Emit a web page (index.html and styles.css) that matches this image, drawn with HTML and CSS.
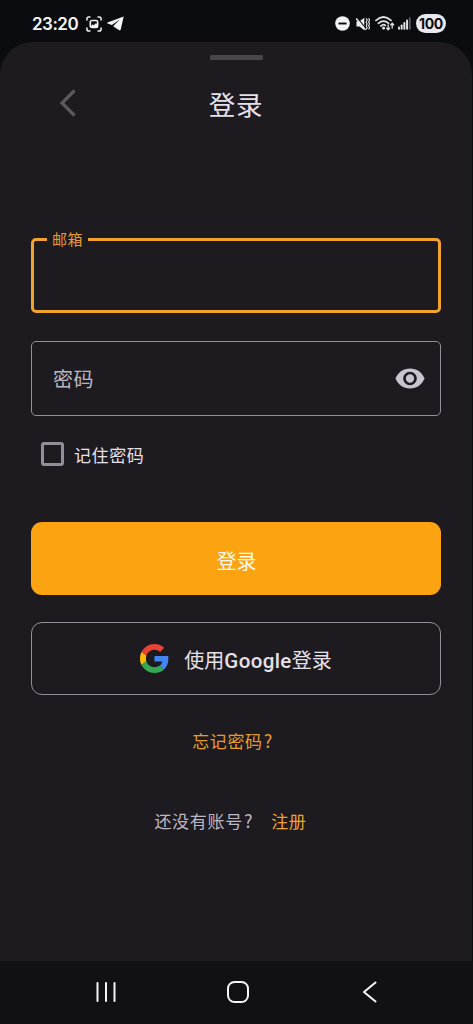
FILE: index.html
```html
<!DOCTYPE html>
<html lang="zh-CN">
<head>
<meta charset="utf-8">
<title>登录</title>
<link rel="stylesheet" href="styles.css">
</head>
<body>
<div class="screen">
  <header class="status">
    <span class="clock">23:20</span>
    <svg class="i-shot" width="16" height="16" viewBox="0 0 17 17" fill="none" stroke="#f4f4f6" stroke-width="1.6" stroke-linecap="round">
      <path d="M1 4.2V3q0-2 2-2h1.200M12.800 1H14q2 0 2 2v1.200M16 12.800V14q0 2-2 2h-1.200M4.200 16H3q-2 0-2-2v-1.200"/>
      <rect x="4.600" y="4.800" width="7.800" height="7.400" rx="1.600" stroke-width="1.700"/>
      <path d="M5.200 11l2-2.200 1.200.9 2.300-2.200 1.300 1.800V12H5.200z" fill="#f4f4f6" stroke="none"/>
    </svg>
    <svg class="i-plane" width="17" height="15" viewBox="0 0 17 15"><path d="M16.700.4L.5 6.600q-.7.5.1.9l4.300 1.400L13 3.300 6.800 9.400 6.400 10.400l5.900 3.900q1.100.5 1.400-.9z" fill="#f7f7f9"/></svg>
    <span class="spacer"></span>
    <svg class="i-dnd" width="15" height="15" viewBox="0 0 15 15"><circle cx="7.500" cy="7.500" r="7.300" fill="#f4f4f6"/><path d="M3.500 7.500h8" stroke="#0a0c10" stroke-width="1.900"/></svg>
    <svg class="i-mute" width="14" height="14" viewBox="0 0 14 14" fill="none" stroke="#ededf0">
      <path d="M.5 4.300h3L8.300.8v12.400L3.500 9.500h-3z" fill="#ededf0" stroke="none"/>
      <path d="M1.200.8l9 11" stroke="#0a0c10" stroke-width="1.300"/><path d="M.3 1.500l9.300 11.400" stroke-width="1.300"/>
      <path d="M10.200 1.200l1 1.900-1 1.900 1 1.900-1 1.900 1 1.900-1 1.800M12.600 1.200l1 1.900-1 1.900 1 1.900-1 1.900 1 1.900-1 1.800" stroke-width="1.100"/>
    </svg>
    <svg class="i-wifi" width="20" height="15" viewBox="0 0 20 15" fill="none" stroke="#e4e4e8" stroke-width="1.700" stroke-linecap="round" stroke-linejoin="round">
      <path d="M1 4.400Q8.500-2.400 16 4.400M3.400 7.300q5.100-4.500 10.200 0M5.900 10q2.600-2.200 4.400-.6"/><circle cx="8.600" cy="12" r=".7" fill="#e4e4e8"/>
      <path d="M13.200 9v4.600M11.700 12.100l1.500 1.700 1.500-1.700M17.200 12V7.400M15.700 8.900l1.500-1.700 1.500 1.700" stroke-width="1.300"/>
    </svg>
    <svg class="i-signal" width="13" height="13" viewBox="0 0 13 13" fill="#e4e4e8"><rect y="9.500" width="1.900" height="3.200" rx=".8"/><rect x="2.700" y="7.500" width="1.900" height="5.200" rx=".8"/><rect x="5.400" y="5" width="1.900" height="7.700" rx=".8"/><rect x="8.100" y="2.600" width="1.900" height="10.100" rx=".8"/><rect x="10.800" y=".3" width="1.900" height="12.400" rx=".8" fill="#5b5c60"/></svg>
    <span class="battery">100</span>
  </header>

  <main class="sheet">
    <div class="handle"></div>
    <div class="titlebar">
      <svg class="back" width="16" height="28" viewBox="0 0 16 28" fill="none" stroke="#5b595e" stroke-width="3.200"><path d="M14.500 1.500L2 14l12.500 12.500"/></svg>
      <h1 class="title">登录</h1>
    </div>
    <form class="form">
      <div class="field field-active"><span class="field-label">邮箱</span></div>
      <div class="field">
        <span class="placeholder">密码</span>
        <svg width="30" height="21" viewBox="0 0 30 21"><path d="M15 .5C8.300.5 2.700 4.600.5 10.500 2.700 16.400 8.300 20.500 15 20.500s12.300-4.100 14.500-10C27.300 4.600 21.700.5 15 .5z" fill="#cac4d0"/><circle cx="15" cy="10.500" r="5.500" fill="#cac4d0" stroke="#1e1b20" stroke-width="2.700"/></svg>
      </div>
      <div class="remember"><span class="checkbox"></span><span class="remember-text">记住密码</span></div>
      <div class="btn btn-primary">登录</div>
      <div class="btn btn-google">
        <svg class="google" width="29" height="29" viewBox="0 0 48 48">
          <path fill="#EA4335" d="M24 9.500c3.540 0 6.710 1.220 9.210 3.600l6.850-6.850C35.900 2.380 30.470 0 24 0 14.620 0 6.510 5.380 2.560 13.220l7.980 6.190C12.430 13.720 17.740 9.500 24 9.500z"/>
          <path fill="#4285F4" d="M46.980 24.550c0-1.570-.15-3.090-.38-4.550H24v9.020h12.940c-.58 2.960-2.260 5.480-4.780 7.180l7.730 6c4.510-4.180 7.090-10.360 7.090-17.650z"/>
          <path fill="#FBBC05" d="M10.530 28.590c-.48-1.450-.76-2.990-.76-4.590s.27-3.140.76-4.590l-7.980-6.190C.92 16.460 0 20.120 0 24s.92 7.540 2.560 10.780z"/>
          <path fill="#34A853" d="M24 48c6.480 0 11.930-2.130 15.890-5.810l-7.730-6c-2.150 1.450-4.920 2.300-8.160 2.300-6.260 0-11.570-4.220-13.470-9.910l-7.980 6.190C6.510 42.620 14.620 48 24 48z"/>
        </svg>
        <span>使用<span class="brand">Google</span>登录</span>
      </div>
    </form>
    <div class="forgot">忘记密码<span class="mark">?</span></div>
    <div class="signup"><span>还没有账号<span class="mark">?</span></span><span class="link">注册</span></div>
  </main>

  <nav class="nav">
    <svg width="22" height="22" viewBox="0 0 22 22" stroke="#f5f5f5" stroke-width="2" stroke-linecap="round"><path d="M2.500 2v18M11 2v18M19.500 2v18"/></svg>
    <svg width="22" height="22" viewBox="0 0 22 22" fill="none" stroke="#f5f5f5" stroke-width="2"><rect x="1" y="1" width="20" height="20" rx="6.500"/></svg>
    <svg width="22" height="22" viewBox="0 0 22 22" fill="none" stroke="#f5f5f5" stroke-width="2" stroke-linecap="round" stroke-linejoin="round"><path d="M16.500 1.500L5 11l11.500 9.500"/></svg>
  </nav>
</div>
</body>
</html>
```
FILE: styles.css
```css
* { box-sizing: border-box; }
body {
  margin: 0;
  background: #0a0c10;
  font-family: "Noto Sans CJK SC", sans-serif;
  color: #e6e0e9;
}
svg { display: block; flex: none; }
.screen { width: 473px; height: 1024px; display: flex; flex-direction: column; overflow: hidden; }

.status { height: 42px; flex: none; display: flex; align-items: center; padding: 5px 27px 0 32px; }
.clock { font: 600 17px/20px Inter, sans-serif; color: #f7f7f9; letter-spacing: -0.5px; width: 54px; }
.i-plane { margin-left: 5px; }
.spacer { flex: 1; }
.i-dnd { margin-right: 1px; }
.i-mute { margin-left: 5px; }
.i-wifi { margin-left: 5px; }
.i-signal { margin-left: 3px; }
.battery {
  margin-left: 5px; width: 30px; height: 19px; border-radius: 10px;
  background: #e9e9ed; color: #0a0c10;
  font: 700 14px/19px Inter, sans-serif; text-align: center; letter-spacing: -0.3px;
}

.sheet { flex: 1; margin-right: 1px; background: #1e1b20; border-radius: 33px 33px 0 0; padding-top: 13px; }
.handle { width: 53px; height: 5px; margin: 0 auto; border-radius: 1px; background: #49454b; }
.titlebar { display: grid; grid-template-columns: 1fr auto 1fr; align-items: center; height: 40px; margin-top: 24px; padding: 0 60px; }
.title { margin: 0; font-size: 26.5px; font-weight: 400; line-height: 40px; letter-spacing: 0.8px; }
.back { margin: -3px 0 0; }

.form { margin: 114px 31px 0; }
.field {
  position: relative; height: 75px; border: 1px solid #938f99; border-radius: 5px;
  display: flex; align-items: center; justify-content: space-between;
  padding: 0 15px 0 21px; margin-bottom: 28px;
}
.field-active { border: 3px solid #f0a22c; }
.field-label {
  position: absolute; left: 13px; top: -12px; padding: 0 5px;
  background: #1e1b20; color: #e69c32; font-size: 15px; line-height: 20px; letter-spacing: 0.5px;
}
.placeholder { color: #bbb5c0; font-size: 20px; letter-spacing: 0.5px; }
.remember {
  display: flex; align-items: center; gap: 10px; height: 26px; margin: -3px 0 55px 10px;
  font-size: 17px; line-height: 26px; letter-spacing: 0.6px;
}
.remember-text { padding-top: 2px; }
.checkbox { width: 23px; height: 24px; border: 3px solid #938f99; border-radius: 3px; }
.btn { display: flex; align-items: center; justify-content: center; height: 73px; border-radius: 11px; font-size: 20px; }
.btn-primary { background: #fca311; color: #fff8e8; padding: 3px 0 0 1px; }
.btn-google { border: 1px solid #938f99; margin-top: 27px; gap: 15px; padding-top: 1px; }
.google { margin-top: -1px; }
.brand { font-family: Roboto, sans-serif; font-weight: 500; font-size: 20.5px; letter-spacing: 0.4px; }
.forgot { margin-top: 32px; text-align: center; color: #e79b2c; font-size: 17px; line-height: 28px; letter-spacing: 0.6px; padding-right: 7px; }
.mark { font-size: 18px; line-height: 1; margin-left: 1px; }
.signup { display: flex; justify-content: center; gap: 18px; margin-top: 52px; padding-right: 11px; font-size: 17px; line-height: 28px; letter-spacing: 0.7px; color: #bdb7c3; }
.link { color: #f0a22c; }

.nav { height: 63px; flex: none; background: #111113; display: flex; justify-content: space-between; align-items: center; padding: 0 92px 2px 95px; }
```
